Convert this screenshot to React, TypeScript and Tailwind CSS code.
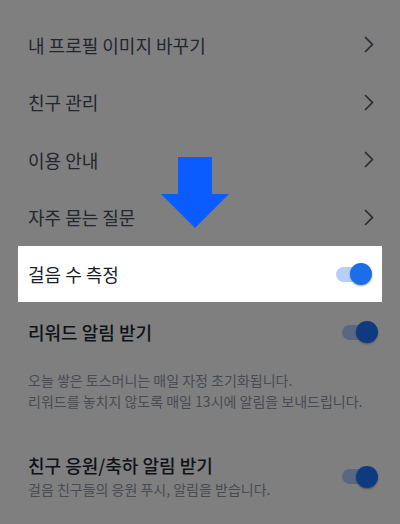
import React from "react";

const font = { fontFamily: '"Noto Sans CJK KR", "Noto Sans", sans-serif' };

const menuItems = ["내 프로필 이미지 바꾸기", "친구 관리", "이용 안내", "자주 묻는 질문"];

function Chevron() {
  return (
    <svg width="10" height="17" viewBox="0 0 10 17" fill="none">
      <polyline
        points="1.5,1.5 8.5,8.5 1.5,15.5"
        stroke="#262a31"
        strokeWidth="1.7"
        strokeLinecap="round"
        strokeLinejoin="round"
      />
    </svg>
  );
}

function Toggle({ dim }: { dim?: boolean }) {
  return (
    <div className="relative w-[36px] h-[22px] shrink-0">
      <div
        className={
          "absolute left-0 top-[3.5px] w-[30px] h-[15px] rounded-full " +
          (dim ? "bg-[#5a6780]" : "bg-[#b7cff7]")
        }
      />
      <div
        className={
          "absolute right-0 top-0 w-[22px] h-[22px] rounded-full shadow-[0_1px_2px_rgba(0,0,0,0.35)] " +
          (dim ? "bg-[#0e3b80]" : "bg-[#1b6ee7]")
        }
      />
    </div>
  );
}

export default function App() {
  return (
    <div className="relative w-[400px] h-[524px] bg-[#7f7f7f] overflow-hidden" style={font}>
      <div className="pt-4">
        {menuItems.map((label) => (
          <div key={label} className="h-[57.5px] flex items-center justify-between pl-7 pr-[26px]">
            <span className="text-[18px] text-[#22262d] leading-6">{label}</span>
            <Chevron />
          </div>
        ))}
        <div className="mx-[18px] h-[56px] bg-white flex items-center justify-between pl-[10px] pr-[10px]">
          <span className="text-[18px] text-[#191f28] leading-6">걸음 수 측정</span>
          <Toggle />
        </div>
      </div>

      <div className="pl-7 pr-[22px]">
        <div className="h-[60px] flex items-center justify-between">
          <span className="text-[18px] font-medium text-[#0f1217] leading-6">리워드 알림 받기</span>
          <Toggle dim />
        </div>
        <div className="mt-[8px] text-[14px] leading-[21px] text-[#474b51]">
          <p>오늘 쌓은 토스머니는 매일 자정 초기화됩니다.</p>
          <p>리워드를 놓치지 않도록 매일 13시에 알림을 보내드립니다.</p>
        </div>
        <div className="mt-[41px] flex items-center justify-between">
          <div>
            <p className="text-[18px] font-medium text-[#0f1217] leading-6">친구 응원/축하 알림 받기</p>
            <p className="mt-[2px] text-[14px] leading-[21px] text-[#474b51]">
              걸음 친구들의 응원 푸시, 알림을 받습니다.
            </p>
          </div>
          <Toggle dim />
        </div>
      </div>

      <svg className="absolute left-0 top-0 pointer-events-none" width="400" height="524">
        <polygon
          points="178,157 212,157 212,194 229,194 195,228 161,194 178,194"
          fill="#0b5cff"
        />
      </svg>
    </div>
  );
}
